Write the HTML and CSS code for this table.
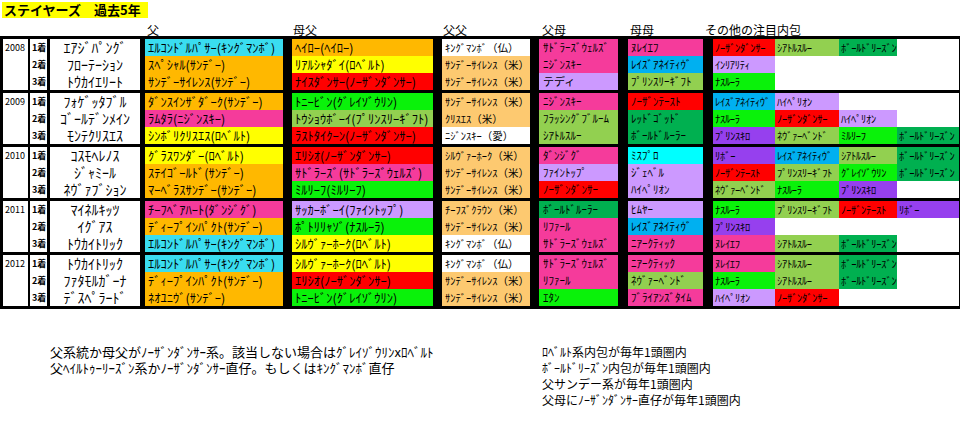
FILE: index.html
```html
<!DOCTYPE html>
<html lang="ja">
<head>
<meta charset="utf-8">
<title>ステイヤーズ 過去5年</title>
<link rel="stylesheet" href="styles.css">
</head>
<body>
<div class="title">ステイヤーズ　過去5年</div>
<div class="head">
  <div></div><div></div><div></div>
  <div class="h hf">父</div><div class="h hmf">母父</div><div class="h hff">父父</div><div class="h hfm">父母</div><div class="h hmm">母母</div><div class="h hot">その他の注目内包</div>
</div>
<div class="table">
  <div class="grp">
    <div class="yr">2008</div>
    <div class="ck">1着</div><div class="nm">ｴｱｼﾞﾊﾟﾝｸﾞ</div><div class="f cy2">ｴﾙｺﾝﾄﾞﾙﾊﾟｻｰ(ｷﾝｸﾞﾏﾝﾎﾞ)</div><div class="mf or">ﾍｲﾛｰ(ﾍｲﾛｰ)</div><div class="ff wh">ｷﾝｸﾞﾏﾝﾎﾞ（仏）</div><div class="fm pk">ｻﾄﾞﾗｰｽﾞｳｪﾙｽﾞ</div><div class="mm pk">ﾇﾚｲｴﾌ</div>
    <div class="ot"><span class="rd">ﾉｰｻﾞﾝﾀﾞﾝｻｰ</span><span class="lg">ｼｱﾄﾙｽﾙｰ</span><span class="dg">ﾎﾞｰﾙﾄﾞﾘｰｽﾞﾝ</span></div>
    <div class="ck">2着</div><div class="nm">ﾌﾛｰﾃｰｼｮﾝ</div><div class="f or">ｽﾍﾟｼｬﾙ(ｻﾝﾃﾞｰ)</div><div class="mf ye">ﾘｱﾙｼｬﾀﾞｲ(ﾛﾍﾞﾙﾄ)</div><div class="ff tn">ｻﾝﾃﾞｰｻｲﾚﾝｽ（米）</div><div class="fm pk">ﾆｼﾞﾝｽｷｰ</div><div class="mm lb">ﾚｲｽﾞｱﾈｲﾃｨｳﾞ</div>
    <div class="ot"><span class="lv">ｲﾝﾘｱﾘﾃｨ</span></div>
    <div class="ck">3着</div><div class="nm">ﾄｳｶｲｴﾘｰﾄ</div><div class="f or">ｻﾝﾃﾞｰｻｲﾚﾝｽ(ｻﾝﾃﾞｰ)</div><div class="mf rd">ﾅｲｽﾀﾞﾝｻｰ(ﾉｰｻﾞﾝﾀﾞﾝｻｰ)</div><div class="ff tn">ｻﾝﾃﾞｰｻｲﾚﾝｽ（米）</div><div class="fm lv">テディ</div><div class="mm lg">ﾌﾟﾘﾝｽﾘｰｷﾞﾌﾄ</div>
    <div class="ot"><span class="gr">ﾅｽﾙｰﾗ</span></div>
  </div>
  <div class="grp">
    <div class="yr">2009</div>
    <div class="ck">1着</div><div class="nm">ﾌｫｹﾞｯﾀﾌﾞﾙ</div><div class="f or">ﾀﾞﾝｽｲﾝｻﾞﾀﾞｰｸ(ｻﾝﾃﾞｰ)</div><div class="mf gr">ﾄﾆｰﾋﾞﾝ(ｸﾞﾚｲｿﾞｳﾘﾝ)</div><div class="ff tn">ｻﾝﾃﾞｰｻｲﾚﾝｽ（米）</div><div class="fm pk">ﾆｼﾞﾝｽｷｰ</div><div class="mm rd">ﾉｰｻﾞﾝﾃｰｽﾄ</div>
    <div class="ot"><span class="lb">ﾚｲｽﾞｱﾈｲﾃｨｳﾞ</span><span class="lv">ﾊｲﾍﾟﾘｵﾝ</span></div>
    <div class="ck">2着</div><div class="nm">ｺﾞｰﾙﾃﾞﾝﾒｲﾝ</div><div class="f pk">ﾗﾑﾀﾗ(ﾆｼﾞﾝｽｷｰ)</div><div class="mf lg">ﾄｳｼｮｳﾎﾞｰｲ(ﾌﾟﾘﾝｽﾘｰｷﾞﾌﾄ)</div><div class="ff tn">ｸﾘｽｴｽ（米）</div><div class="fm lg">ﾌﾗｯｼﾝｸﾞﾌﾞﾙｰﾑ</div><div class="mm dg">ﾚｯﾄﾞｺﾞｯﾄﾞ</div>
    <div class="ot"><span class="gr">ﾅｽﾙｰﾗ</span><span class="rd">ﾉｰｻﾞﾝﾀﾞﾝｻｰ</span><span class="lv">ﾊｲﾍﾟﾘｵﾝ</span></div>
    <div class="ck">3着</div><div class="nm">ﾓﾝﾃｸﾘｽｴｽ</div><div class="f ye">ｼﾝﾎﾞﾘｸﾘｽｴｽ(ﾛﾍﾞﾙﾄ)</div><div class="mf rd">ﾗｽﾄﾀｲｸｰﾝ(ﾉｰｻﾞﾝﾀﾞﾝｻｰ)</div><div class="ff wh">ﾆｼﾞﾝｽｷｰ（愛）</div><div class="fm lg">ｼｱﾄﾙｽﾙｰ</div><div class="mm dg">ﾎﾞｰﾙﾄﾞﾙｰﾗｰ</div>
    <div class="ot"><span class="pu">ﾌﾟﾘﾝｽｷﾛ</span><span class="lg">ﾈｳﾞｧｰﾍﾞﾝﾄﾞ</span><span class="gr">ﾐﾙﾘｰﾌ</span><span class="dg">ﾎﾞｰﾙﾄﾞﾘｰｽﾞﾝ</span></div>
  </div>
  <div class="grp">
    <div class="yr">2010</div>
    <div class="ck">1着</div><div class="nm">ｺｽﾓﾍﾚﾉｽ</div><div class="f ye">ｸﾞﾗｽﾜﾝﾀﾞｰ(ﾛﾍﾞﾙﾄ)</div><div class="mf rd">ｴﾘｼｵ(ﾉｰｻﾞﾝﾀﾞﾝｻｰ)</div><div class="ff tn">ｼﾙｳﾞｧｰﾎｰｸ（米）</div><div class="fm pk">ﾀﾞﾝｼﾞｸﾞ</div><div class="mm cy">ﾐｽﾌﾟﾛ</div>
    <div class="ot"><span class="pu">ﾘﾎﾞｰ</span><span class="lb">ﾚｲｽﾞｱﾈｲﾃｨｳﾞ</span><span class="lg">ｼｱﾄﾙｽﾙｰ</span><span class="dg">ﾎﾞｰﾙﾄﾞﾘｰｽﾞﾝ</span></div>
    <div class="ck">2着</div><div class="nm">ｼﾞｬﾐｰﾙ</div><div class="f or">ｽﾃｲｺﾞｰﾙﾄﾞ(ｻﾝﾃﾞｰ)</div><div class="mf pk">ｻﾄﾞﾗｰｽﾞ(ｻﾄﾞﾗｰｽﾞｳｪﾙｽﾞ)</div><div class="ff tn">ｻﾝﾃﾞｰｻｲﾚﾝｽ（米）</div><div class="fm lv">ﾌｧｲﾝﾄｯﾌﾟ</div><div class="mm lv">ｼﾞｪﾍﾞﾙ</div>
    <div class="ot"><span class="rd">ﾉｰｻﾞﾝﾃｰｽﾄ</span><span class="lg">ﾌﾟﾘﾝｽﾘｰｷﾞﾌﾄ</span><span class="gr">ｸﾞﾚｲｿﾞｳﾘﾝ</span><span class="dg">ﾎﾞｰﾙﾄﾞﾘｰｽﾞﾝ</span></div>
    <div class="ck">3着</div><div class="nm">ﾈｳﾞｧﾌﾞｼｮﾝ</div><div class="f or">ﾏｰﾍﾞﾗｽｻﾝﾃﾞｰ(ｻﾝﾃﾞｰ)</div><div class="mf gr">ﾐﾙﾘｰﾌ(ﾐﾙﾘｰﾌ)</div><div class="ff tn">ｻﾝﾃﾞｰｻｲﾚﾝｽ（米）</div><div class="fm rd">ﾉｰｻﾞﾝﾀﾞﾝｻｰ</div><div class="mm lv">ﾊｲﾍﾟﾘｵﾝ</div>
    <div class="ot"><span class="lg">ﾈｳﾞｧｰﾍﾞﾝﾄﾞ</span><span class="gr">ﾅｽﾙｰﾗ</span><span class="pu">ﾌﾟﾘﾝｽｷﾛ</span></div>
  </div>
  <div class="grp">
    <div class="yr">2011</div>
    <div class="ck">1着</div><div class="nm">ﾏｲﾈﾙｷｯﾂ</div><div class="f pk">ﾁｰﾌﾍﾞｱﾊｰﾄ(ﾀﾞﾝｼﾞｸﾞ)</div><div class="mf lv">ｻｯｶｰﾎﾞｰｲ(ﾌｧｲﾝﾄｯﾌﾟ)</div><div class="ff tn">ﾁｰﾌｽﾞｸﾗｳﾝ（米）</div><div class="fm dg">ﾎﾞｰﾙﾄﾞﾙｰﾗｰ</div><div class="mm lv">ﾋﾑﾔｰ</div>
    <div class="ot"><span class="gr">ﾅｽﾙｰﾗ</span><span class="lg">ﾌﾟﾘﾝｽﾘｰｷﾞﾌﾄ</span><span class="rd">ﾉｰｻﾞﾝﾃｰｽﾄ</span><span class="pu">ﾘﾎﾞｰ</span></div>
    <div class="ck">2着</div><div class="nm">ｲｸﾞｱｽ</div><div class="f or">ﾃﾞｨｰﾌﾟｲﾝﾊﾟｸﾄ(ｻﾝﾃﾞｰ)</div><div class="mf gr">ﾎﾟﾄﾘﾘｬｿﾞ(ﾅｽﾙｰﾗ)</div><div class="ff tn">ｻﾝﾃﾞｰｻｲﾚﾝｽ（米）</div><div class="fm pk">ﾘﾌｧｰﾙ</div><div class="mm lb">ﾚｲｽﾞｱﾈｲﾃｨｳﾞ</div>
    <div class="ot"><span class="pu">ﾌﾟﾘﾝｽｷﾛ</span></div>
    <div class="ck">3着</div><div class="nm">ﾄｳｶｲﾄﾘｯｸ</div><div class="f cy2">ｴﾙｺﾝﾄﾞﾙﾊﾟｻｰ(ｷﾝｸﾞﾏﾝﾎﾞ)</div><div class="mf ye">ｼﾙｳﾞｧｰﾎｰｸ(ﾛﾍﾞﾙﾄ)</div><div class="ff wh">ｷﾝｸﾞﾏﾝﾎﾞ（仏）</div><div class="fm pk">ｻﾄﾞﾗｰｽﾞｳｪﾙｽﾞ</div><div class="mm pk">ﾆｱｰｸﾃｨｯｸ</div>
    <div class="ot"><span class="pk">ﾇﾚｲｴﾌ</span><span class="lg">ｼｱﾄﾙｽﾙｰ</span><span class="dg">ﾎﾞｰﾙﾄﾞﾘｰｽﾞﾝ</span></div>
  </div>
  <div class="grp">
    <div class="yr">2012</div>
    <div class="ck">1着</div><div class="nm">ﾄｳｶｲﾄﾘｯｸ</div><div class="f cy2">ｴﾙｺﾝﾄﾞﾙﾊﾟｻｰ(ｷﾝｸﾞﾏﾝﾎﾞ)</div><div class="mf ye">ｼﾙｳﾞｧｰﾎｰｸ(ﾛﾍﾞﾙﾄ)</div><div class="ff wh">ｷﾝｸﾞﾏﾝﾎﾞ（仏）</div><div class="fm pk">ｻﾄﾞﾗｰｽﾞｳｪﾙｽﾞ</div><div class="mm pk">ﾆｱｰｸﾃｨｯｸ</div>
    <div class="ot"><span class="pk">ﾇﾚｲｴﾌ</span><span class="lg">ｼｱﾄﾙｽﾙｰ</span><span class="dg">ﾎﾞｰﾙﾄﾞﾘｰｽﾞﾝ</span></div>
    <div class="ck">2着</div><div class="nm">ﾌｧﾀﾓﾙｶﾞｰﾅ</div><div class="f or">ﾃﾞｨｰﾌﾟｲﾝﾊﾟｸﾄ(ｻﾝﾃﾞｰ)</div><div class="mf rd">ｴﾘｼｵ(ﾉｰｻﾞﾝﾀﾞﾝｻｰ)</div><div class="ff tn">ｻﾝﾃﾞｰｻｲﾚﾝｽ（米）</div><div class="fm pk">ﾘﾌｧｰﾙ</div><div class="mm lg">ﾈｳﾞｧｰﾍﾞﾝﾄﾞ</div>
    <div class="ot"><span class="gr">ﾅｽﾙｰﾗ</span><span class="lg">ｼｱﾄﾙｽﾙｰ</span><span class="dg">ﾎﾞｰﾙﾄﾞﾘｰｽﾞﾝ</span></div>
    <div class="ck">3着</div><div class="nm">ﾃﾞｽﾍﾟﾗｰﾄﾞ</div><div class="f or">ﾈｵﾕﾆｳﾞ(ｻﾝﾃﾞｰ)</div><div class="mf gr">ﾄﾆｰﾋﾞﾝ(ｸﾞﾚｲｿﾞｳﾘﾝ)</div><div class="ff tn">ｻﾝﾃﾞｰｻｲﾚﾝｽ（米）</div><div class="fm gr">ｴﾀﾝ</div><div class="mm pk">ﾌﾞﾗｲｱﾝｽﾞﾀｲﾑ</div>
    <div class="ot"><span class="lv">ﾊｲﾍﾟﾘｵﾝ</span><span class="rd">ﾉｰｻﾞﾝﾀﾞﾝｻｰ</span></div>
  </div>
</div>
<div class="notes">
  <div class="note-left">
    <p>父系統か母父がﾉｰｻﾞﾝﾀﾞﾝｻｰ系。該当しない場合はｸﾞﾚｲｿﾞｳﾘﾝxﾛﾍﾞﾙﾄ</p>
    <p>父ﾍｲﾙﾄｩｰﾘｰｽﾞﾝ系かﾉｰｻﾞﾝﾀﾞﾝｻｰ直仔。もしくはｷﾝｸﾞﾏﾝﾎﾞ直仔</p>
  </div>
  <div class="note-right">
    <p>ﾛﾍﾞﾙﾄ系内包が毎年1頭圏内</p>
    <p>ﾎﾞｰﾙﾄﾞﾘｰｽﾞﾝ内包が毎年1頭圏内</p>
    <p>父サンデー系が毎年1頭圏内</p>
    <p>父母にﾉｰｻﾞﾝﾀﾞﾝｻｰ直仔が毎年1頭圏内</p>
  </div>
</div>
</body>
</html>
```

FILE: styles.css
```css
* { box-sizing: border-box; }
body {
  margin: 0;
  background: #fff;
  color: #000;
  font-family: "Noto Sans CJK JP", "Noto Sans", sans-serif;
  width: 963px;
  height: 425px;
  overflow: hidden;
}
.title {
  display: inline-block;
  margin: 2px 0 0 2px;
  padding: 0 7px 0 2px;
  background: #ffff00;
  font-weight: bold;
  font-size: 13px;
  line-height: 16px;
  height: 16px;
  vertical-align: top;
}
.head, .grp {
  display: grid;
  grid-template-columns: 25px 19px 93px 143px 150px 97px 88px 85px 256px;
}
.head {
  padding-left: 3px;
  height: 12px;
  font-size: 12px;
  line-height: 12px;
  width: 959px;
}
.h { white-space: nowrap; }
.hf { margin-left: 7px; }
.hmf { margin-left: 10px; }
.hff { margin-left: 10px; }
.hfm { margin-left: 12px; }
.hmm { margin-left: 12px; }
.hot { margin-left: 2px; }

.table {
  background: #000;
  width: 960px;
  padding: 3px 1px 3px 3px;
  display: flex;
  flex-direction: column;
  gap: 3px;
}
.grp {
  grid-template-rows: repeat(3, 17px);
}
.grp > div {
  white-space: nowrap;
  overflow: hidden;
  line-height: 17px;
}
.grp > .nm, .grp > .ck, .grp > .yr { overflow: visible; }
.yr {
  grid-row: span 3;
  background: #fff;
  font-size: 9px;
  padding-left: 2px;
}
.ck {
  margin-left: 2px;
  background: #fff;
  font-size: 9px;
  font-weight: bold;
  padding-left: 2px;
}
.nm {
  margin-left: 3px;
  background: #fff;
  font-size: 14px;
  text-align: center;
}
.f { margin-left: 5px; font-size: 12.5px; padding-left: 3px; }
.mf { margin-left: 9px; font-size: 12.5px; padding-left: 3px; }
.ff { margin-left: 9px; font-size: 10.5px; padding-left: 3px; }
.fm { margin-left: 9px; font-size: 11px; padding-left: 4px; }
.mm { margin-left: 10px; font-size: 11px; padding-left: 3px; }
.ot {
  margin-left: 10px;
  background: #fff;
  display: grid;
  grid-template-columns: 62px 64px 58px 62px;
}
.ot span {
  display: block;
  font-size: 10.5px;
  letter-spacing: -0.3px;
  line-height: 17px;
  padding-left: 2px;
  overflow: hidden;
  white-space: nowrap;
}

.or { background: #ffb800; }
.tn { background: #fdc970; }
.pk { background: #f53b9b; }
.lv { background: #cc99ff; }
.gr { background: #0af20a; }
.lg { background: #92d050; }
.dg { background: #00b050; }
.rd { background: #ff0000; }
.ye { background: #ffff00; }
.lb { background: #00b0f0; }
.cy { background: #00ffff; }
.cy2 { background: #3addf0; }
.pu { background: #9640ee; }
.wh { background: #ffffff; }

.notes {
  display: flex;
  margin-top: 35px;
  line-height: 16px;
}
.notes p { margin: 0; white-space: nowrap; }
.note-left { width: 542px; padding-left: 50px; font-size: 13px; }
.note-right { font-size: 12px; }
```
